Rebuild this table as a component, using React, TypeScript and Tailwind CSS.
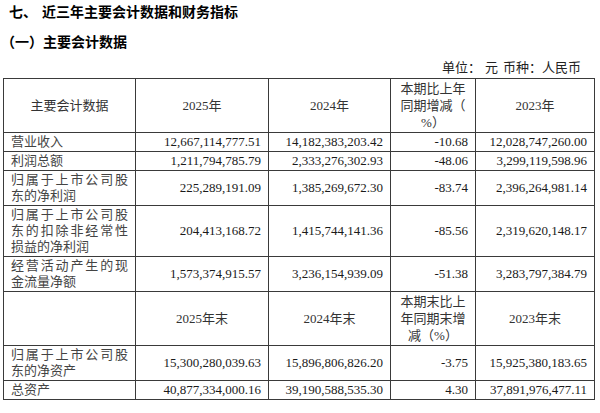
import React from 'react';

type Row = { label: string[]; values: string[] };

const FONT = "font-['Liberation_Serif','Noto_Sans_CJK_SC',serif]";

const firstBlock: Row[] = [
  { label: ['营业收入'], values: ['12,667,114,777.51', '14,182,383,203.42', '-10.68', '12,028,747,260.00'] },
  { label: ['利润总额'], values: ['1,211,794,785.79', '2,333,276,302.93', '-48.06', '3,299,119,598.96'] },
  { label: ['归属于上市公司股', '东的净利润'], values: ['225,289,191.09', '1,385,269,672.30', '-83.74', '2,396,264,981.14'] },
  {
    label: ['归属于上市公司股', '东的扣除非经常性', '损益的净利润'],
    values: ['204,413,168.72', '1,415,744,141.36', '-85.56', '2,319,620,148.17'],
  },
  { label: ['经营活动产生的现', '金流量净额'], values: ['1,573,374,915.57', '3,236,154,939.09', '-51.38', '3,283,797,384.79'] },
];

const secondBlock: Row[] = [
  { label: ['归属于上市公司股', '东的净资产'], values: ['15,300,280,039.63', '15,896,806,826.20', '-3.75', '15,925,380,183.65'] },
  { label: ['总资产'], values: ['40,877,334,000.16', '39,190,588,535.30', '4.30', '37,891,976,477.11'] },
];

// multi-line labels: full lines are spread edge to edge, the last one is left as is
const Label = ({ lines }: { lines: string[] }) => (
  <>
    {lines.map((line, i) =>
      i < lines.length - 1 ? (
        <div key={i} className="text-justify [text-align-last:justify]">
          {line}
        </div>
      ) : (
        <div key={i}>{line}</div>
      )
    )}
  </>
);

const DataRow = ({ row }: { row: Row }) => (
  <tr>
    <td className="border border-[#3a3a3a] px-[7px] py-[1px] text-left align-middle text-[#444]">
      <Label lines={row.label} />
    </td>
    {row.values.map((v, i) => (
      <td key={i} className="border border-[#3a3a3a] pr-[7px] py-[1px] text-right align-middle text-[#1a1a1a]">
        {v}
      </td>
    ))}
  </tr>
);

const HeadCell = ({ children }: { children?: React.ReactNode }) => (
  <td className="h-[54px] border border-[#3a3a3a] text-center align-middle leading-[17px] text-[#333]">{children}</td>
);

export default function App() {
  return (
    <div className={`w-[600px] h-[413px] overflow-hidden bg-white ${FONT}`}>
      <div className="pl-[9px] pt-[3px] text-[14px] leading-[20px] font-bold text-black">
        <span>七、</span>
        <span className="ml-[5px]">近三年主要会计数据和财务指标</span>
      </div>
      <div className="mt-[10px] pl-[1px] text-[14px] leading-[20px] font-bold text-black">（一）主要会计数据</div>

      <div className="mt-[7px] pr-[19px] text-right text-[13px] leading-[16px] text-[#222]">
        单位：<span className="ml-[4px]">元</span>
        <span className="ml-[5px]">币种：人民币</span>
      </div>

      <div className="mt-[2px] pl-[3px]">
        <table className="w-[591px] table-fixed border-collapse border border-[#3a3a3a] text-[13px] leading-[16px]">
          <colgroup>
            <col className="w-[132px]" />
            <col className="w-[133px]" />
            <col className="w-[122px]" />
            <col className="w-[85px]" />
            <col className="w-[119px]" />
          </colgroup>
          <tbody>
            <tr>
              <HeadCell>主要会计数据</HeadCell>
              <HeadCell>2025年</HeadCell>
              <HeadCell>2024年</HeadCell>
              <HeadCell>
                本期比上年
                <br />
                同期增减（
                <br />
                %）
              </HeadCell>
              <HeadCell>2023年</HeadCell>
            </tr>
            {firstBlock.map((r, i) => (
              <DataRow key={i} row={r} />
            ))}
            <tr>
              <HeadCell />
              <HeadCell>2025年末</HeadCell>
              <HeadCell>2024年末</HeadCell>
              <HeadCell>
                本期末比上
                <br />
                年同期末增
                <br />
                减（%）
              </HeadCell>
              <HeadCell>2023年末</HeadCell>
            </tr>
            {secondBlock.map((r, i) => (
              <DataRow key={i} row={r} />
            ))}
          </tbody>
        </table>
      </div>
    </div>
  );
}
